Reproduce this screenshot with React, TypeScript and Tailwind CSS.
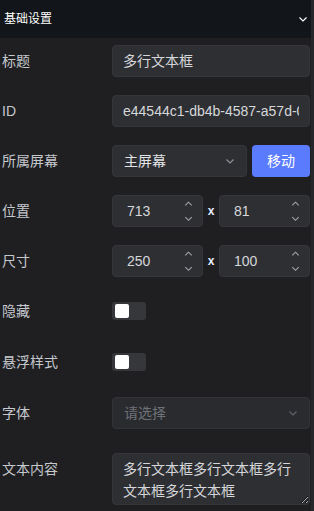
import React, { useState } from 'react';

const FONT = { fontFamily: '"Liberation Sans", "Noto Sans CJK SC", sans-serif' };

const Chevron = ({ className = '' }: { className?: string }) => (
    <svg viewBox="0 0 12 12" className={className} fill="none" stroke="currentColor" strokeWidth="1.2">
        <path d="M2.5 4.5 L6 8 L9.5 4.5" />
    </svg>
);

const ChevronUp = () => (
    <svg viewBox="0 0 12 12" className="w-[11px] h-[11px]" fill="none" stroke="currentColor" strokeWidth="1.1">
        <path d="M2.5 8 L6 4.5 L9.5 8" />
    </svg>
);

const NumberInput = ({ value }: { value: number }) => (
    <div className="flex-1 min-w-0 h-8 rounded bg-[#2e2f33] border border-[#35363a] flex items-center pl-[14px] pr-[8px]">
        <span className="flex-1 text-[14px] text-[#d6d7da]">{value}</span>
        <div className="flex flex-col items-center text-[#a4a6ab] gap-[4px]">
            <ChevronUp />
            <Chevron className="w-[11px] h-[11px]" />
        </div>
    </div>
);

const Toggle = ({ on, onClick }: { on: boolean; onClick: () => void }) => (
    <button
        onClick={onClick}
        className={`w-[34px] h-[18px] rounded-[3px] flex items-center px-[3px] ${on ? 'bg-[#5b7bfe] justify-end' : 'bg-[#36373b] justify-start'}`}
    >
        <span className="w-[14px] h-[14px] rounded-[2px] bg-white" />
    </button>
);

const Row = ({ label, className = '', children }: { label: string; className?: string; children: React.ReactNode }) => (
    <div className={`flex items-start ${className}`}>
        <div className="w-[112px] shrink-0 pl-[2px] leading-8 text-[14px] text-[#c5c8cd]">{label}</div>
        <div className="flex-1 min-w-0">{children}</div>
    </div>
);

export default function App() {
    const [hidden, setHidden] = useState(false);
    const [floating, setFloating] = useState(false);

    return (
        <div className="w-[314px] h-[511px] bg-[#1f1f22] overflow-hidden flex" style={FONT}>
            <div className="flex-1 min-w-0 flex flex-col">
                <div className="h-[38px] bg-[#12161a] flex items-center justify-between pl-[4px] pr-[2px]">
                    <span className="text-[12px] text-white">基础设置</span>
                    <Chevron className="w-[12px] h-[12px] text-white" />
                </div>

                <div className="pt-[7px] pr-px">
                    <Row label="标题" className="mb-[18px]">
                        <div className="h-8 rounded bg-[#2e2f33] border border-[#35363a] flex items-center px-[10px] text-[14px] text-[#d6d7da]">
                            多行文本框
                        </div>
                    </Row>

                    <Row label="ID" className="mb-[18px]">
                        <div className="h-8 rounded bg-[#2e2f33] border border-[#35363a] flex items-center px-[10px] text-[14px] text-[#d6d7da] overflow-hidden">
                            <span className="whitespace-nowrap overflow-hidden">e44544c1-db4b-4587-a57d-0f3c2b1e9a7d</span>
                        </div>
                    </Row>

                    <Row label="所属屏幕" className="mb-[18px]">
                        <div className="flex gap-[5px]">
                            <div className="flex-1 min-w-0 h-8 rounded bg-[#2e2f33] border border-[#35363a] flex items-center pl-[11px] pr-[10px]">
                                <span className="flex-1 text-[14px] text-[#e2e3e6]">主屏幕</span>
                                <Chevron className="w-[12px] h-[12px] text-[#8d9096]" />
                            </div>
                            <button className="w-[58px] h-8 rounded bg-[#5b7bfe] text-[14px] text-white">移动</button>
                        </div>
                    </Row>

                    <Row label="位置" className="mb-[18px]">
                        <div className="flex items-center">
                            <NumberInput value={713} />
                            <span className="w-[16px] text-center text-[12px] font-bold text-[#e8ecff]">x</span>
                            <NumberInput value={81} />
                        </div>
                    </Row>

                    <Row label="尺寸" className="mb-[18px]">
                        <div className="flex items-center">
                            <NumberInput value={250} />
                            <span className="w-[16px] text-center text-[12px] font-bold text-[#e8ecff]">x</span>
                            <NumberInput value={100} />
                        </div>
                    </Row>

                    <Row label="隐藏" className="mb-[19px]">
                        <div className="h-8 flex items-center">
                            <Toggle on={hidden} onClick={() => setHidden(!hidden)} />
                        </div>
                    </Row>

                    <Row label="悬浮样式" className="mb-[19px]">
                        <div className="h-8 flex items-center">
                            <Toggle on={floating} onClick={() => setFloating(!floating)} />
                        </div>
                    </Row>

                    <Row label="字体" className="mb-[24px]">
                        <div className="h-8 rounded bg-[#2a2b2f] border border-[#323337] flex items-center pl-[11px] pr-[10px]">
                            <span className="flex-1 text-[14px] text-[#6e7178]">请选择</span>
                            <Chevron className="w-[12px] h-[12px] text-[#5f6268]" />
                        </div>
                    </Row>

                    <Row label="文本内容">
                        <textarea
                            defaultValue="多行文本框多行文本框多行文本框多行文本框"
                            className="block w-full h-[52px] rounded bg-[#2e2f33] border border-[#35363a] px-[10px] py-[4px] text-[14px] leading-[22px] text-[#d6d7da] resize-y outline-none overflow-hidden"
                        />
                    </Row>
                </div>
            </div>
            <div className="w-[3px] bg-[#26272b]" />
        </div>
    );
}
